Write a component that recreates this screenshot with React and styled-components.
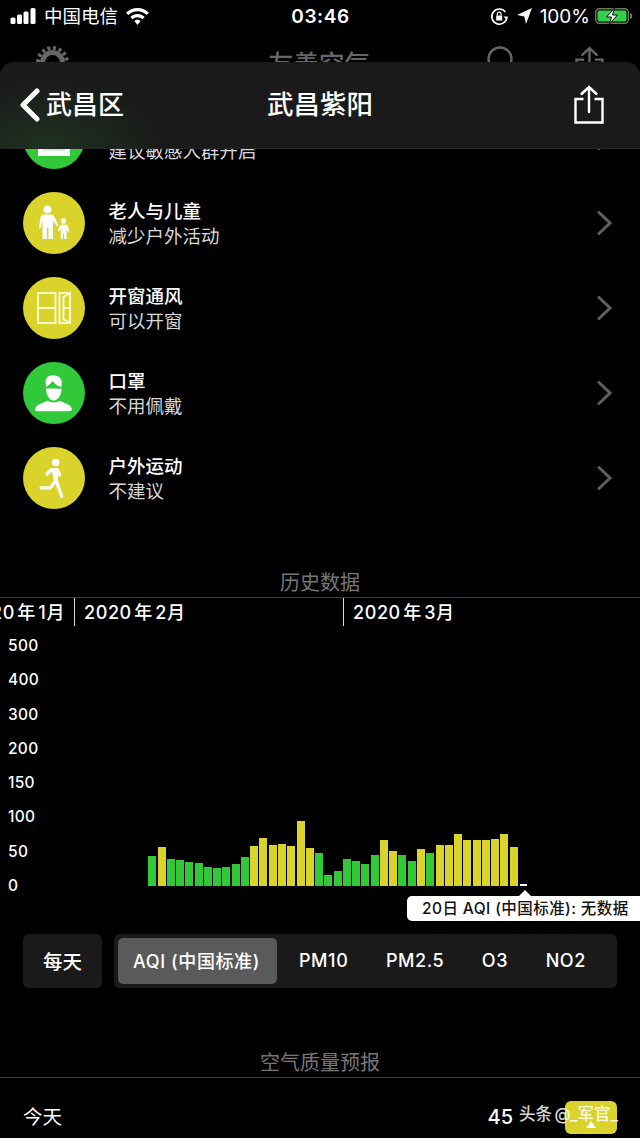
import React from 'react'
import styled, { createGlobalStyle } from 'styled-components'

const GREEN = '#31c93a'
const YELLOW = '#dad32b'
const SANS = 'Inter, "Noto Sans CJK SC", sans-serif'

const GlobalStyle = createGlobalStyle`
  html, body {
    margin: 0;
    background: #000;
  }
  * {
    box-sizing: border-box;
  }
`

const Page = styled.div`
  position: relative;
  width: 640px;
  height: 1138px;
  overflow: hidden;
  background: #000;
  color: #fff;
  font-family: ${SANS};
`

const StatusBar = styled.div`
  display: flex;
  align-items: center;
  height: 32px;
  padding: 0 7px 0 10px;
`

const StatusSide = styled.div`
  flex: 1;
  display: flex;
  align-items: center;
  justify-content: ${(props) => (props.$end ? 'flex-end' : 'flex-start')};
  gap: 8px;
`

const Carrier = styled.span`
  font-size: 18.5px;
  line-height: 22px;
`

const Clock = styled.span`
  font-size: 19px;
  font-weight: 600;
  letter-spacing: 0.6px;
  margin-left: -2px;
`

const BatteryText = styled.span`
  font-size: 19px;
  margin-right: -3px;
`

const DimBar = styled.div`
  display: flex;
  align-items: flex-start;
  justify-content: space-between;
  height: 75px;
  padding: 14px 36px 0 36px;
  color: #666;
`

const DimTitle = styled.span`
  font-size: 25.5px;
  font-weight: 500;
  line-height: 36px;
  margin-left: 82px;
`

const DimRight = styled.div`
  display: flex;
  gap: 62px;
`

const NavBar = styled.div`
  position: absolute;
  top: 62px;
  left: 0;
  right: 0;
  height: 87px;
  display: flex;
  align-items: center;
  justify-content: center;
  padding-bottom: 6px;
  border-radius: 14px 14px 0 0;
  border-bottom: 1px solid #262626;
  background: radial-gradient(ellipse 120px 70px at 45px 100%, #1e3120, transparent), #1a1a1a;
`

const BackLink = styled.div`
  position: absolute;
  left: 19px;
  top: 25px;
  display: flex;
  align-items: center;
  gap: 5px;
  font-size: 26px;
  font-weight: 500;
  line-height: 36px;
`

const NavTitle = styled.div`
  font-size: 26.5px;
  font-weight: 500;
`

const NavShare = styled.div`
  position: absolute;
  right: 36px;
  top: 23px;
  line-height: 0;
`

const List = styled.div`
  display: flex;
  flex-direction: column;
  gap: 23px;
  padding: 0 28px 0 23px;
`

const Row = styled.div`
  display: flex;
  align-items: center;
  height: 62px;
`

const IconCircle = styled.div`
  flex: none;
  width: 62px;
  height: 62px;
  border-radius: 50%;
  background: ${(props) => props.$color};
  line-height: 0;
`

const RowText = styled.div`
  flex: 1;
  margin-left: 23.5px;
  padding-top: 1px;
`

const RowTitle = styled.div`
  font-size: 18.5px;
  font-weight: 500;
  line-height: 25px;
`

const RowSub = styled.div`
  font-size: 18.5px;
  line-height: 25px;
  color: #d8d8d8;
`

const SectionTitle = styled.div`
  height: 30px;
  margin-top: ${(props) => props.$top}px;
  border-bottom: 1px solid #3c3c3c;
  font-size: 20px;
  line-height: 31px;
  text-align: center;
  color: #777;
`

const MonthStrip = styled.div`
  display: flex;
  height: 28px;
`

const Month = styled.div`
  flex: none;
  display: flex;
  justify-content: ${(props) => (props.$first ? 'flex-end' : 'flex-start')};
  align-items: center;
  width: ${(props) => props.$width}px;
  padding: 0 9px 2px;
  border-left: ${(props) => (props.$first ? 'none' : '1.5px solid #ddd')};
  font-size: 18px;
  font-weight: 500;
  letter-spacing: 0.6px;
  word-spacing: -3px;
  white-space: nowrap;
`

const Chart = styled.div`
  position: relative;
  display: flex;
  height: 258px;
  margin-top: 11px;
`

const Axis = styled.div`
  flex: none;
  display: flex;
  flex-direction: column;
  justify-content: space-between;
  width: 148.3px;
  padding-left: 8px;
  font-size: 15.5px;
  font-weight: 500;
  letter-spacing: 0.3px;
  line-height: 18px;
`

const Bars = styled.div`
  display: flex;
  align-items: flex-end;
  gap: 1.27px;
  padding-bottom: 9.5px;
`

const Bar = styled.div`
  width: 8px;
  background: ${(props) => props.$color};
`

const EmptyBar = styled.div`
  width: 7px;
  height: 1.5px;
  margin-left: 1px;
  background: #fff;
`

const Tooltip = styled.div`
  position: absolute;
  top: 259px;
  left: 407px;
  width: 250px;
  height: 25px;
  padding-left: 15px;
  border-radius: 5px;
  background: #fff;
  color: #111;
  font-size: 15.5px;
  font-weight: 500;
  line-height: 25px;
  letter-spacing: 0.42px;
  white-space: nowrap;

  &::before {
    content: '';
    position: absolute;
    top: -6px;
    left: 112px;
    border-left: 6px solid transparent;
    border-right: 6px solid transparent;
    border-bottom: 6px solid #fff;
  }
`

const Controls = styled.div`
  display: flex;
  gap: 12px;
  height: 54px;
  margin-top: 39px;
  padding: 0 23px;
`

const DailyButton = styled.div`
  flex: none;
  display: flex;
  align-items: center;
  justify-content: center;
  width: 79px;
  padding-bottom: 2px;
  border-radius: 6px;
  background: #1a1a1a;
  font-size: 19.5px;
  font-weight: 500;
`

const Segments = styled.div`
  flex: 1;
  display: flex;
  gap: 7px;
  padding: 4px;
  border-radius: 6px;
  background: #1a1a1a;
`

const Segment = styled.div`
  display: flex;
  align-items: center;
  padding: 0 15px 2px;
  padding-right: ${(props) => (props.$active ? '17px' : '15.5px')};
  border-radius: 5px;
  background: ${(props) => (props.$active ? '#5a5a5a' : 'transparent')};
  font-size: 18px;
  font-weight: 500;
  letter-spacing: 0.6px;
  white-space: nowrap;
`

const ForecastRow = styled.div`
  display: flex;
  align-items: center;
  height: 78px;
  padding: 0 23px;
`

const ForecastDay = styled.div`
  flex: 1;
  padding-bottom: 3px;
  font-size: 19.5px;
`

const ForecastValue = styled.div`
  font-size: 20px;
  font-weight: 500;
  margin-right: 52px;
`

const ForecastChip = styled.div`
  flex: none;
  display: flex;
  align-items: flex-end;
  justify-content: center;
  width: 52px;
  height: 33px;
  padding-bottom: 6px;
  border-radius: 6px;
  background: ${YELLOW};
  line-height: 0;
`

const Watermark = styled.div`
  position: absolute;
  left: 519px;
  top: 1102px;
  font-size: 16.5px;
  font-weight: 500;
  line-height: 25px;
  word-spacing: -2px;
  color: rgba(255, 255, 255, 0.85);
  white-space: nowrap;
`

const heights = [
  29.5, 39, 27, 25.5, 23.5, 22.5, 18.5, 17.5, 19, 21.5, 29, 40, 47.5, 41, 41.5, 40, 64.5, 38, 32.5, 10.5, 14.5,
  26.5, 24.5, 21.5, 31, 45.5, 35, 31, 25, 37, 33, 41, 41, 52, 46, 45.5, 46, 47, 52, 39,
]
const greenBars = [0, 2, 3, 4, 5, 6, 7, 8, 9, 10, 18, 19, 20, 21, 22, 23, 24, 27, 28, 30]

const rows = [
  { title: '空气净化器', sub: '建议敏感人群开启', color: GREEN, icon: 'purifier' },
  { title: '老人与儿童', sub: '减少户外活动', color: YELLOW, icon: 'family' },
  { title: '开窗通风', sub: '可以开窗', color: YELLOW, icon: 'window' },
  { title: '口罩', sub: '不用佩戴', color: GREEN, icon: 'mask' },
  { title: '户外运动', sub: '不建议', color: YELLOW, icon: 'run' },
]

const axisLabels = ['500', '400', '300', '200', '150', '100', '50', '0']
const tabs = ['AQI (中国标准)', 'PM10', 'PM2.5', 'O3', 'NO2']

function RowIcon({ name }) {
  return (
    <svg width="62" height="62" viewBox="0 0 62 62" fill="#fff">
      {name === 'purifier' && (
        <g>
          <rect x="15" y="36" width="32" height="13" fill="#fff" />
          <rect x="20" y="41" width="22" height="3" fill="#cfeecf" />
        </g>
      )}
      {name === 'family' && (
        <g>
          <circle cx="24.5" cy="17.3" r="3.9" />
          <path d="M20.5 22.5H28.5Q30.5 22.5 31.3 24.5L35.5 33.5 34.2 34.8 30 28.5V47H25.5V35.5H24V47H19.5V28.5L17.5 36.5H15.8L17.7 24.5Q18.2 22.5 20.5 22.5Z" />
          <circle cx="40.5" cy="29" r="2.7" />
          <path d="M37.8 32.8H43.2Q44.4 32.8 44.8 34L46.6 40 45.3 40.6 43.6 37V47H41.2V41.5H40V47H37.7V37L36 39.5 34.8 38.5 36.7 34Q37 32.8 37.8 32.8Z" />
        </g>
      )}
      {name === 'window' && (
        <g fill="none" stroke="#fdf8c8" strokeWidth="2">
          <rect x="15" y="16" width="17.5" height="30" />
          <path d="M15 31H32.5" />
          <path d="M36.5 16H47V46H36.5ZM47 16 40.5 20V42.5L47 46M40.5 31H47" />
        </g>
      )}
      {name === 'mask' && (
        <g>
          <path d="M22.8 22C21.5 16 26 12.5 31.5 13.5 36 13.700 39.5 17 38.700 22.500L38.300 25C35 24.500 32 22 29.500 19C28 22 25 23.500 23.200 25Z" />
          <path d="M23 26.500C26 26.500 35 26.500 38.500 26.800 38.500 32 35.500 38.500 30.800 38.500 26 38.500 23 32 23 26.500Z" />
          <path d="M12 47.500C12.500 42.500 20 41 25 38.800 27.500 41 34 41 36.500 38.800 41 41 48.500 42.500 49 47.500 48.800 48.800 47.500 49.200 46 49.200H15C13 49.200 12 48.800 12 47.500Z" />
        </g>
      )}
      {name === 'run' && (
        <g>
          <circle cx="32.8" cy="15.5" r="3.7" />
          <path
            d="M24 27 28.5 22.5H34L36.8 28M31 23 33.5 34 36 41.5 38.7 49.5M33 33.5 27.3 40.8H18"
            fill="none"
            stroke="#fff"
            strokeWidth="3.2"
            strokeLinejoin="round"
            strokeLinecap="round"
          />
          <path d="M28.5 22H34.5L35 33 31 35Z" />
        </g>
      )}
    </svg>
  )
}

function Chevron() {
  return (
    <svg width="15" height="25" viewBox="0 0 15 25" fill="none" stroke="#5f5f5f" strokeWidth="3" strokeLinecap="round">
      <path d="M2 1.5 13 12 2 22.5" />
    </svg>
  )
}

function ShareIcon({ color, width = 30, height = 39, sw = 2.4 }) {
  return (
    <svg width={width} height={height} viewBox="0 0 30 39" fill="none" stroke={color} strokeWidth={sw}>
      <path d="M9.5 14H1.5V37.5H28.5V14H20.5" strokeLinejoin="miter" />
      <path d="M15 27V2M7.5 9 15 2 22.5 9" strokeLinecap="round" />
    </svg>
  )
}

function StatusIcons() {
  return (
    <>
      <svg width="19" height="19" viewBox="0 0 19 19" fill="none" stroke="#fff" strokeWidth="1.6">
        <path d="M15.5 5A7.6 7.6 0 1 0 17 10" />
        <path d="M13.5 9.5H18L15.8 12Z" fill="#fff" stroke="none" />
        <rect x="6.2" y="8.5" width="6" height="5" fill="#fff" stroke="none" />
        <path d="M7.3 8.5V7A1.9 1.9 0 0 1 11.1 7V8.5" strokeWidth="1.2" />
      </svg>
      <svg width="15" height="16" viewBox="0 0 15 16" fill="#fff">
        <path d="M15 0 9 16 7.3 8.5 0 7Z" />
      </svg>
    </>
  )
}

function Battery() {
  return (
    <svg width="38" height="16" viewBox="0 0 38 16">
      <rect x="0.7" y="0.7" width="32.6" height="14.6" rx="3.5" fill="none" stroke="#6f7a5a" strokeWidth="1.4" />
      <rect x="2.5" y="2.5" width="29" height="11" rx="2" fill="#35d14a" />
      <path d="M35 5V11C36.5 10.6 37.3 9.5 37.3 8S36.5 5.4 35 5Z" fill="#6f7a5a" />
      <path d="M19.5 0 11.5 9H16.5L14.5 16 22.5 7H17.5Z" fill="#fff" stroke="#111" strokeWidth="1" />
    </svg>
  )
}

function App() {
  return (
    <Page>
      <GlobalStyle />
      <StatusBar>
        <StatusSide>
          <svg width="26" height="16" viewBox="0 0 26 16" fill="#fff">
            <rect x="0.5" y="9.5" width="5" height="6.5" rx="1.5" />
            <rect x="7" y="6.5" width="5" height="9.5" rx="1.5" />
            <rect x="13.5" y="3.5" width="5" height="12.5" rx="1.5" />
            <rect x="20.5" y="0" width="5" height="16" rx="1.5" />
          </svg>
          <Carrier>中国电信</Carrier>
          <svg width="23" height="17" viewBox="0 0 23 17" fill="#fff">
            <path d="M11.5 0C7 0 3.2 1.8 0 4.8L2.2 7C4.8 4.6 8 3.2 11.5 3.2S18.2 4.6 20.8 7L23 4.8C19.8 1.8 16 0 11.5 0Z" />
            <path d="M11.5 6C8.8 6 6.3 7 4.3 9L6.5 11.2C7.9 9.9 9.6 9.2 11.5 9.2S15.1 9.9 16.5 11.2L18.7 9C16.7 7 14.2 6 11.5 6Z" />
            <path d="M11.5 11.8C10.3 11.8 9.3 12.2 8.4 13.1L11.5 17 14.6 13.1C13.7 12.2 12.7 11.8 11.5 11.8Z" />
          </svg>
        </StatusSide>
        <Clock>03:46</Clock>
        <StatusSide $end>
          <StatusIcons />
          <BatteryText>100%</BatteryText>
          <Battery />
        </StatusSide>
      </StatusBar>

      <DimBar>
        <svg width="33" height="33" viewBox="0 0 33 33" fill="none" stroke="#666">
          <circle cx="16.5" cy="16.5" r="10" strokeWidth="5" />
          <circle cx="16.5" cy="16.5" r="14.5" strokeWidth="4" strokeDasharray="3 2.7" />
        </svg>
        <DimTitle>友善空气</DimTitle>
        <DimRight>
          <svg width="26" height="30" viewBox="0 0 26 30" fill="none" stroke="#666" strokeWidth="2.4">
            <circle cx="13" cy="13" r="11.5" />
          </svg>
          <ShareIcon color="#666" width="29" height="38" />
        </DimRight>
      </DimBar>

      <NavBar>
        <BackLink>
          <svg width="22" height="34" viewBox="0 0 22 34" fill="none" stroke="#fff" strokeWidth="5" strokeLinecap="round" strokeLinejoin="round">
            <path d="M18 3 4 17 18 31" />
          </svg>
          武昌区
        </BackLink>
        <NavTitle>武昌紫阳</NavTitle>
        <NavShare>
          <ShareIcon color="#fff" />
        </NavShare>
      </NavBar>

      <List>
        {rows.map((row) => (
          <Row key={row.title}>
            <IconCircle $color={row.color}>
              <RowIcon name={row.icon} />
            </IconCircle>
            <RowText>
              <RowTitle>{row.title}</RowTitle>
              <RowSub>{row.sub}</RowSub>
            </RowText>
            <Chevron />
          </Row>
        ))}
      </List>

      <SectionTitle $top={59}>历史数据</SectionTitle>
      <MonthStrip>
        <Month $first $width={74}>2020 年 1月</Month>
        <Month $width={269}>2020 年 2月</Month>
        <Month $width={269}>2020 年 3月</Month>
      </MonthStrip>

      <Chart>
        <Axis>
          {axisLabels.map((label) => (
            <div key={label}>{label}</div>
          ))}
        </Axis>
        <Bars>
          {heights.map((h, i) => (
            <Bar key={i} style={{ height: h }} $color={greenBars.includes(i) ? GREEN : YELLOW} />
          ))}
          <EmptyBar />
        </Bars>
        <Tooltip>20日 AQI (中国标准): 无数据</Tooltip>
      </Chart>

      <Controls>
        <DailyButton>每天</DailyButton>
        <Segments>
          {tabs.map((tab, i) => (
            <Segment key={tab} $active={i === 0}>
              {tab}
            </Segment>
          ))}
        </Segments>
      </Controls>

      <SectionTitle $top={60}>空气质量预报</SectionTitle>
      <ForecastRow>
        <ForecastDay>今天</ForecastDay>
        <ForecastValue>45</ForecastValue>
        <ForecastChip>
          <svg width="10" height="7" viewBox="0 0 10 7" fill="#fff">
            <path d="M5 0 10 7H0Z" />
          </svg>
        </ForecastChip>
      </ForecastRow>
      <Watermark>头条 @_军官_</Watermark>
    </Page>
  )
}

export default App
